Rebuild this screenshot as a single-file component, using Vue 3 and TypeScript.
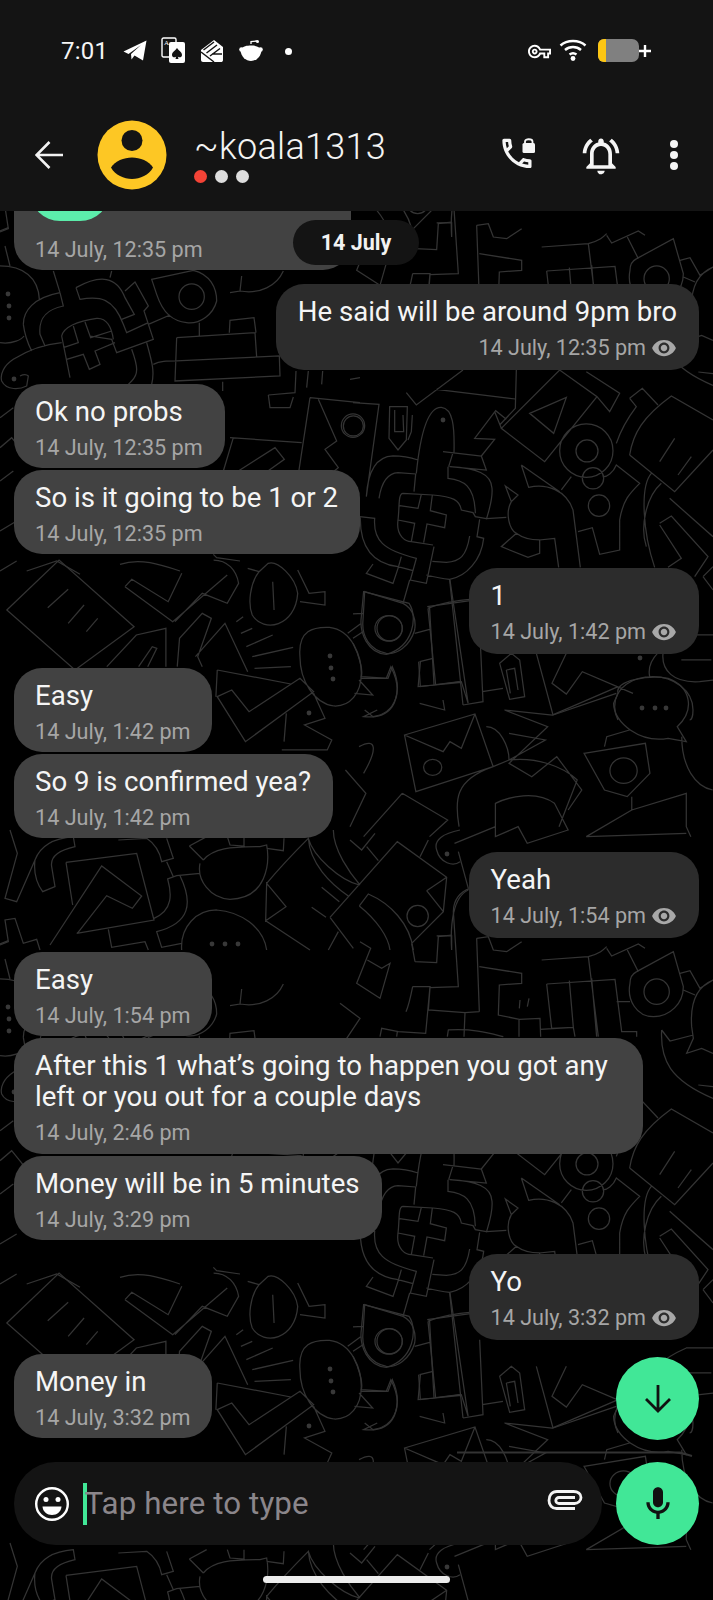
<script setup lang="ts">
interface Msg { text: string; time: string; out?: boolean; wide?: boolean }

const messages: Msg[] = [
  { text: 'He said will be around 9pm bro', time: '14 July, 12:35 pm', out: true },
  { text: 'Ok no probs', time: '14 July, 12:35 pm' },
  { text: 'So is it going to be 1 or 2', time: '14 July, 12:35 pm' },
  { text: '1', time: '14 July, 1:42 pm', out: true },
  { text: 'Easy', time: '14 July, 1:42 pm' },
  { text: 'So 9 is confirmed yea?', time: '14 July, 1:42 pm' },
  { text: 'Yeah', time: '14 July, 1:54 pm', out: true },
  { text: 'Easy', time: '14 July, 1:54 pm' },
  { text: 'After this 1 what’s going to happen you got any left or you out for a couple days', time: '14 July, 2:46 pm', wide: true },
  { text: 'Money will be in 5 minutes', time: '14 July, 3:29 pm' },
  { text: 'Yo', time: '14 July, 3:32 pm', out: true },
  { text: 'Money in', time: '14 July, 3:32 pm' },
]

const c = (x: number, y: number, r: number) =>
  `M${x - r} ${y}a${r} ${r} 0 1 0 ${2 * r} 0a${r} ${r} 0 1 0 ${-2 * r} 0`

const doodles: { t: string; d: string }[] = [
  {
    t: 'translate(353 360) scale(.33333)',
    d: 'M160 98L190 135L330 30M250 88L487 117M490 30L487 145L440 195M110 140L163 140L160 240L135 270L108 235ZM125 150L125 215L152 215L150 165M178 165L175 215L165 240M0 128L78 133L40 410' +
      c(0, 197, 35) +
      'M190 340C200 240 220 140 265 142C300 145 305 200 303 278M270 275L385 288L425 238L365 235L428 152L460 178M40 410C45 330 70 290 120 288C150 288 170 292 195 300M78 415C85 370 100 340 135 338L188 342L183 395M285 320L285 355C330 360 365 375 367 460M290 320C370 325 415 340 417 385C420 420 405 460 400 478M300 278L287 320M385 288L400 330L290 320M150 400C135 400 140 440 135 480C128 530 160 545 175 545L240 555M150 400L240 405C300 410 320 420 325 450L360 458L367 470L400 476L460 472M205 403L195 445L140 437M238 405L232 452L280 465L275 503L222 492L212 548M135 480L185 490L175 545M20 470L65 475C60 540 90 570 190 595L172 660L220 670L243 560M22 470C20 560 60 610 135 620L180 632M145 590L135 625L120 670L40 640L60 612M380 478L372 530L392 535C385 600 340 650 290 658C260 655 240 650 220 645M350 528C340 590 320 605 280 607L238 604M290 660L330 1035M225 745C260 730 320 720 350 718M225 745L248 975M200 905L240 895M197 905L202 980L320 965M380 800L390 1025L330 1035M388 995L450 985M270 1020L275 1050L200 1030M35 695L150 730C180 745 190 780 185 810C170 860 130 885 100 880C50 870 25 830 30 780Z' +
      c(110, 805, 38) +
      'M150 730L170 660M185 820L230 808M0 835L30 815M0 762L30 760M445 205L620 30L732 110L575 305ZM530 160L640 112L602 220ZM732 110L770 155L800 100L700 35M445 205L425 155' +
      c(700, 272, 80) + c(702, 273, 33) + c(720, 355, 32) + c(738, 437, 32) +
      'M625 390L655 350M505 315L527 382C580 370 640 390 660 450L682 622M505 315L620 395M457 378L495 405L475 425ZM475 425C455 460 470 510 490 520L445 560L525 592L560 580L560 540L605 535L617 622M490 520C510 535 540 540 560 540M675 515L718 503L740 583L800 570L800 480C810 420 830 400 860 370L790 315C780 340 760 350 752 350M830 285C840 220 870 170 955 108L1080 180M830 285L965 395L1080 270M830 115L868 85L915 135M830 115L850 140C820 180 800 220 790 250M920 305L965 235M975 345L1015 290M895 340C860 380 870 520 905 622M925 370C880 410 860 500 880 560M950 415L1080 530M920 490L955 468L1065 590L1025 650M920 495L985 595L945 622M1050 650L1080 620M1080 690L1050 650M550 880L600 1065L790 1000M640 880L597 970L640 1002L688 935L840 1000M890 950C880 900 920 860 1000 825L1080 825M930 880C925 930 960 970 1040 965L1080 960M985 900L1075 900M440 910L475 880L500 900L515 1010L470 1018ZM460 930L485 925L495 990M460 930L472 1000M0 850C20 890 30 930 25 950L105 955L118 920C150 990 130 1060 60 1070L35 1050M785 1040C785 980 840 950 900 950C960 950 1020 990 1020 1050C1020 1070 1015 1080 1010 1080M785 1040C785 1060 790 1070 795 1080',
  },
  {
    t: 'translate(0 211) scale(.33333)',
    d: 'M0 165C70 165 115 200 118 265M0 395C40 400 65 385 72 375M70 340C70 300 100 260 180 245L190 285C140 295 115 320 120 370L135 405M70 340C75 380 85 400 95 420M160 180L180 245M228 230L240 265C300 255 340 260 370 340L380 365L445 335M228 230C300 190 350 195 375 260L403 310L365 325M375 240L405 213L445 285L432 300L460 385L350 425L335 385L270 375M445 340L510 312M185 375C190 350 230 330 290 322C320 320 335 350 340 385M185 375L210 500M220 345L235 395L190 410M255 333L272 380L335 360M200 445L250 430L268 475L300 460L285 420L345 395M185 395C130 400 80 420 40 445C10 465 0 490 5 510C20 540 60 535 80 525L85 495C80 490 70 490 60 495M395 415C415 470 415 490 395 510L385 520M440 395C455 450 465 480 455 520M455 205L580 178C630 190 650 230 650 270C640 310 600 340 560 335C520 330 490 310 470 250Z' +
      c(575, 257, 38) +
      'M598 335L598 375M530 380L765 365L770 438M530 380L525 510L840 495L838 435L530 450C500 450 480 450 460 460M688 365L690 328L762 320L768 365M668 512L668 540M690 680L905 695M700 680L670 780M715 780L825 710L853 745L790 790M930 560L895 790M930 560L1080 575M805 552L885 545L888 480M805 552L810 590L870 590L880 558M920 530L925 480M965 520L968 480M955 565L1010 690L975 715L1015 770L990 790M1050 505L1080 500M690 245L720 240L725 195M720 240C780 250 830 225 850 180M335 180L330 200M0 620L40 590M0 710L35 680L100 760M15 105L30 165M0 60L25 50M0 810L40 780M0 960L50 930M0 1080L50 1050M80 1080L170 1050L240 1090M640 1030L650 1040L720 1050M360 1060C420 1040 480 1060 540 1080' +
      c(1060, 645, 30),
  },
  {
    t: 'translate(0 830) scale(.33333)',
    d: 'M105 90C120 50 160 25 220 20L225 50C180 60 150 80 155 110L165 170L128 185C110 160 100 130 105 90ZM105 90L50 215L15 205L52 70L30 0M198 97L410 70L462 270L230 310M198 97L218 225M150 345L305 108L425 198L397 235L320 197L232 310M355 30L440 25C470 45 480 70 485 95L520 85L500 25M500 95L520 140M600 130L530 137L503 147C515 190 520 240 462 265M540 137C580 220 570 280 470 305L485 352L545 340M568 48L610 90M568 48L620 20M610 90C640 55 690 50 780 50L800 45C810 100 800 205 690 208C630 205 590 150 600 100M682 20L690 45L732 48L732 20M800 55L850 62L852 25M545 360C540 290 590 240 650 240C720 245 790 290 800 360M325 298L335 352L435 335L445 360M800 160C850 100 890 60 925 25C930 100 990 160 1045 198M800 160L858 230L797 272ZM797 272L930 360M965 172L1018 215M935 232L978 262M925 25C940 80 1020 150 1078 165M1000 0C1000 60 1050 130 1080 165M990 262L1192 35L1340 142L1330 245L1235 340M990 262L1060 355M1280 182L1340 142M1280 182L1330 245M1078 228L1105 192C1170 220 1230 280 1240 360M1078 228C1130 270 1165 320 1170 360M1050 30L1085 60L1125 10M1100 50L1135 92M1260 80L1285 30M1375 65L1405 175M1310 60C1300 30 1330 10 1380 0M1310 60C1320 100 1360 110 1380 95M1355 360C1350 280 1360 200 1405 180M1310 318L1355 318L1355 360M985 360L1015 305M0 345L25 335L15 270L45 265L70 340L110 328L120 360' +
      c(1253, 258, 32),
  },
  {
    t: 'translate(340 840) scale(.33333)',
    d: 'M410 295L445 290L460 330L500 335L545 305M410 295L418 515M418 380L545 400L545 430L478 435L475 525L538 538L600 535L602 590M537 538L537 590M540 480L538 505M567 475L562 500M605 360L745 350C780 340 790 330 800 320M745 350L775 590M620 432L825 418L845 575L890 575L890 590M620 432L635 565L700 562L688 422M755 415L770 590M600 568L700 562L705 590M340 215C340 180 360 155 390 145M340 215L355 440L270 443L265 510L375 518L418 515M375 518L372 590M322 590L325 570C400 565 450 580 490 590M218 440L270 440L257 580L175 575L125 565L120 590M172 575L170 590M218 440C210 480 205 500 198 515M225 365L290 368L295 290L335 285M225 365L215 310M60 305L92 325L50 430L120 475L150 370L125 385L82 360M20 595L60 535L0 490M890 395L1000 335L1030 440C1030 490 990 530 940 530C890 530 860 480 870 430C870 410 880 400 890 395ZM895 395L862 330M870 485L830 485M800 325L815 348L895 312L915 325M1020 400L1050 392L1080 445L1119 420M1030 450L1065 465M1119 420C1070 440 1050 490 1055 560L1060 595L1040 640L1085 625L1119 640M965 570L990 603L1060 585M965 570C960 660 990 720 1119 775M1075 735L1119 740' +
      c(950, 455, 38),
  },
  {
    t: 'translate(0 560) scale(.4545 .33333)',
    d: 'M15 150L130 0L295 200L165 330ZM105 143L150 88M150 190L185 135M190 215L215 175M275 80L380 185L500 45M275 80L290 58L370 125L400 40M385 185L445 100L500 130L525 70C520 30 500 0 470 0M235 320L300 225L365 205L365 320M305 320L335 260L345 265L325 320M390 320L395 235L445 160L465 175L435 290L445 320M545 25L570 35C550 70 545 130 555 165C580 220 650 200 655 100C650 50 610 0 590 10L570 35M600 65L603 150M655 30L680 100L715 95L715 135L660 125M520 185L535 170M530 220L555 205M542 260L600 225M555 290L645 262M560 325L640 320M430 290L495 190L545 335M478 410L510 390L548 455L660 355L690 395L540 545ZM478 330L475 410M478 330L640 372M630 460L625 545M690 400L715 475L670 495L730 540L720 570L620 570M660 290C655 210 690 200 725 202C775 210 795 290 795 340C795 400 770 440 735 438C690 430 660 360 660 290ZM790 360L820 405L780 400M765 220L795 190M795 355L850 355L860 320C890 400 870 480 800 470L830 450M800 95L900 130C920 170 910 260 850 283C810 280 790 220 795 170ZM940 140L1035 122M945 140L955 375L1015 365L1030 430M925 305L920 380L1015 367M990 60L1030 430M890 525L1045 462L1085 620L915 695ZM890 525L975 575L990 545L1015 565L1045 462M760 630L805 700L770 800M885 700L800 830M885 700L985 780L945 830M790 560C830 530 830 570 800 640M1085 620C1000 660 1000 720 1010 800M1070 500C1100 500 1120 560 1120 600C1180 590 1240 620 1270 660L1230 800' +
      'M932 622a20 24 0 1 0 40 0a20 24 0 1 0 -40 0' +
      'M825 205a30 38 0 1 0 60 0a30 38 0 1 0 -60 0' +
      'M1360 400C1350 360 1430 345 1470 355C1520 380 1530 450 1490 500L1510 545L1470 535C1410 550 1350 490 1350 430ZM1110 450L1215 465L1360 380M1110 450L1205 500L1120 610L1170 650L1225 590L1280 690L1250 750M1285 580L1420 550L1430 640L1380 710L1330 690ZM1330 560L1335 530L1385 510M1500 530C1500 620 1530 680 1568 690M1390 710L1390 750L1510 700L1510 800L1520 830M1390 750L1290 830L1510 820M1085 620L1120 600L1200 540L1120 520M1090 730C1120 710 1180 690 1220 730L1250 810L1160 850L1140 800L1090 830ZM1000 850L1090 800' +
      'M1342 632a30 38 0 1 0 60 0a30 38 0 1 0 -60 0',
  },
]

const dots: [number, number][] = [
  [8, 294], [9, 306], [9, 318], [330, 656], [331, 668], [333, 679], [443, 420], [640, 658],
  [642, 708], [655, 708], [666, 708], [14, 379], [212, 944], [225, 944], [238, 944], [447, 854], [309, 713],
]
</script>

<template>
  <div class="page">
    <svg class="doodle" width="713" height="1600" viewBox="0 0 713 1600" aria-hidden="true">
      <defs>
        <g id="tile">
          <g v-for="(g, i) in doodles" :key="i" :transform="g.t">
            <path :d="g.d" fill="none" stroke="#343434" stroke-width="1.25" vector-effect="non-scaling-stroke" />
          </g>
          <circle v-for="(p, i) in dots" :key="'d' + i" :cx="p[0]" :cy="p[1]" r="2.4" fill="#383838" />
        </g>
      </defs>
      <use href="#tile" y="-713" />
      <use href="#tile" />
      <use href="#tile" y="713" />
      <path d="M457 1452.5H680L692 1456" fill="none" stroke="#333" stroke-width="2" />
    </svg>

    <header class="top">
      <div class="status">
        <span class="clock">7:01</span>
        <svg class="ic-tg" width="24" height="22" viewBox="0 0 24 22">
          <path d="M0.5 11.5L23.5 0.5L20 20.5L11.5 15.5L8.5 19.5L8 14L18 5L5.5 14Z" fill="#fff" />
        </svg>
        <svg class="ic-cards" width="25" height="27" viewBox="0 0 25 27">
          <rect x="1" y="1" width="14" height="19" rx="1.5" fill="#141414" stroke="#fff" stroke-width="1.4" />
          <text x="3" y="8" font-size="7" font-family="Liberation Serif, serif" fill="#fff">A</text>
          <rect x="8" y="5" width="16" height="21" rx="2" fill="#fff" />
          <path d="M16 11C18 14 21 15 21 18C21 20.500 18 21 16.800 19.500L17.500 22H14.500L15.200 19.500C14 21 11 20.500 11 18C11 15 14 14 16 11Z" fill="#141414" />
        </svg>
        <svg class="ic-stack" width="24" height="24" viewBox="0 0 24 24">
          <path d="M1 11L14 1L23 8V21C23 22.500 22 23 21 23H3C2 23 1 22 1 21Z" fill="#fff" />
          <path d="M3.500 11L14 3M6.500 14L17 6M10 17L20 9.500M1 13L14 23M22 15H12" fill="none" stroke="#141414" stroke-width="1.500" />
        </svg>
        <svg class="ic-reddit" width="24" height="22" viewBox="0 0 24 22">
          <path d="M12 4V1.500L18 1" fill="none" stroke="#fff" stroke-width="1.300" />
          <circle cx="18.500" cy="1.500" r="1.500" fill="#fff" />
          <circle cx="2.500" cy="9.500" r="2.300" fill="#fff" />
          <circle cx="21.500" cy="9.500" r="2.300" fill="#fff" />
          <path d="M1.500 10C4 6 8 5.500 12 5.500C16 5.500 20 6 22.500 10C22 17 17 21 12 21C7 21 2 17 1.500 10Z" fill="#fff" />
        </svg>
        <span class="notif-dot"></span>
        <span class="status-right">
          <svg class="ic-key" width="23" height="23" viewBox="0 0 24 24">
            <path fill="#fff" d="M22 19h-6v-4h-2.680c-1.140 2.420-3.600 4-6.320 4-3.860 0-7-3.140-7-7s3.140-7 7-7c2.720 0 5.170 1.580 6.320 4H24v6h-2v4zm-4-2h2v-4h2v-2H11.940l-.23-.67C11.010 8.340 9.110 7 7 7c-2.760 0-5 2.240-5 5s2.240 5 5 5c2.110 0 4.010-1.340 4.710-3.330l.23-.67H18v4zM7 15c-1.650 0-3-1.350-3-3s1.350-3 3-3 3 1.350 3 3-1.350 3-3 3zm0-4c-.55 0-1 .45-1 1s.45 1 1 1 1-.45 1-1-.45-1-1-1z" />
          </svg>
          <svg class="ic-wifi" width="28" height="22" viewBox="0 0 28 22">
            <path d="M1.500 6.500C8 0.500 20 0.500 26.500 6.500M6 11C10.500 7 17.500 7 22 11M10.500 15.500C12.500 14 15.500 14 17.500 15.500" fill="none" stroke="#fff" stroke-width="2.400" />
            <circle cx="14" cy="19.500" r="2.400" fill="#fff" />
          </svg>
          <span class="battery"><span class="battery-fill"></span></span>
          <svg class="plus" width="14" height="14" viewBox="0 0 14 14">
            <path d="M7 1V13M1 7H13" fill="none" stroke="#fff" stroke-width="2.400" />
          </svg>
        </span>
      </div>
      <div class="bar">
        <svg class="back" width="28" height="28" viewBox="0 0 28 28">
          <path d="M28 14H2M14.500 1L1.500 14L14.500 27" fill="none" stroke="#f2f2f2" stroke-width="2.600" />
        </svg>
        <svg class="avatar" width="70" height="70" viewBox="0 0 70 70">
          <circle cx="35" cy="35" r="34.500" fill="#fdc724" />
          <circle cx="35" cy="20.500" r="10.500" fill="#141414" />
          <path d="M14 47.500C18 41 27 37.500 35 37.500C43 37.500 52 41 56 47.500C52 55 43 59 35 59C27 59 18 55 14 47.500Z" fill="#141414" />
        </svg>
        <div class="who">
          <div class="name">~koala1313</div>
          <div class="presence"><i class="p red"></i><i class="p"></i><i class="p"></i></div>
        </div>
        <svg class="call" width="36" height="36" viewBox="0 0 36 36">
          <g transform="translate(-3.500 -3) scale(1.620)">
            <path fill="#f5f5f5" d="M6.540 5c.06.89.21 1.760.45 2.590l-1.200 1.200c-.41-1.200-.67-2.470-.76-3.790h1.510m9.860 12.020c.85.24 1.720.39 2.600.45v1.490c-1.320-.09-2.590-.35-3.800-.75l1.200-1.190M7.500 3H4c-.55 0-1 .45-1 1 0 9.390 7.610 17 17 17 .55 0 1-.45 1-1v-3.490c0-.55-.45-1-1-1-1.240 0-2.450-.2-3.570-.57-.1-.04-.21-.05-.31-.05-.26 0-.51.1-.71.29l-2.200 2.200c-2.830-1.450-5.150-3.760-6.590-6.590l2.200-2.200c.28-.28.36-.67.25-1.020C8.700 6.450 8.500 5.250 8.500 4c0-.55-.45-1-1-1z" />
          </g>
          <rect x="21.500" y="6" width="12.500" height="10" rx="1.500" fill="#f5f5f5" />
          <path d="M24 6.500V4.500C24 1.500 31.500 1.500 31.500 4.500V6.500" fill="none" stroke="#f5f5f5" stroke-width="1.800" />
        </svg>
        <svg class="bell" width="44" height="44" viewBox="0 0 24 24">
          <path fill="#f5f5f5" d="M7.580 4.080 6.150 2.650C3.750 4.480 2.170 7.300 2.030 10.500h2c.15-2.650 1.510-4.970 3.550-6.420zm12.390 6.420h2c-.15-3.200-1.730-6.020-4.120-7.850l-1.420 1.430c2.020 1.450 3.390 3.770 3.540 6.420zM18 11c0-3.070-1.640-5.640-4.500-6.320V4c0-.83-.67-1.500-1.500-1.500s-1.500.67-1.500 1.500v.68C7.630 5.360 6 7.920 6 11v5l-2 2v1h16v-1l-2-2v-5zm-2 6H8v-6c0-2.480 1.510-4.500 4-4.500s4 2.020 4 4.500v6zm-4 5c.14 0 .27-.01.4-.04.65-.14 1.180-.58 1.440-1.180.1-.24.15-.5.15-.78h-4c.01 1.100.9 2 2.010 2z" />
        </svg>
        <div class="kebab"><i></i><i></i><i></i></div>
      </div>
    </header>

    <main class="list">
      <div class="bubble in first">
        <div class="green-pill"></div>
        <div class="meta"><span>14 July, 12:35 pm</span></div>
      </div>
      <div v-for="(m, i) in messages" :key="i" class="bubble" :class="[m.out ? 'out' : 'in', { wide: m.wide }]">
        <div class="text">{{ m.text }}</div>
        <div class="meta">
          <span>{{ m.time }}</span>
          <svg v-if="m.out" width="26" height="26" viewBox="0 0 24 24">
            <path fill="#a8a8a8" d="M12 4.500C7 4.500 2.730 7.610 1 12c1.730 4.390 6 7.500 11 7.500s9.270-3.110 11-7.500c-1.730-4.390-6-7.500-11-7.500zM12 17c-2.760 0-5-2.240-5-5s2.240-5 5-5 5 2.240 5 5-2.240 5-5 5zm0-8c-1.660 0-3 1.340-3 3s1.340 3 3 3 3-1.340 3-3-1.340-3-3-3z" />
          </svg>
        </div>
      </div>
    </main>

    <div class="date-pill">14 July</div>

    <button class="fab down" aria-label="Scroll down">
      <svg width="30" height="30" viewBox="0 0 30 30">
        <path d="M15 1V27M3 15L15 27L27 15" fill="none" stroke="#111" stroke-width="2.800" />
      </svg>
    </button>

    <div class="composer">
      <div class="input">
        <svg class="smile" width="36" height="36" viewBox="0 0 36 36">
          <circle cx="18" cy="18" r="15.800" fill="none" stroke="#fff" stroke-width="2.400" />
          <circle cx="12" cy="13.500" r="2.500" fill="#fff" />
          <circle cx="24" cy="13.500" r="2.500" fill="#fff" />
          <path d="M8.500 20.500H27.500C27 26 23 29 18 29C13 29 9 26 8.500 20.500Z" fill="#fff" />
        </svg>
        <span class="caret"></span>
        <span class="placeholder">Tap here to type</span>
        <svg class="clip" width="36" height="24" viewBox="0 0 36 24">
          <path d="M28 20.500H9.500C5 20.500 2 17 2 12.500C2 7 5 3.500 10 3.500H26.500C31 3.500 34 6 34 9.500C34 13 31 15.500 27.500 15.500H12C10 15.500 8.800 14 8.800 12.500C8.800 11 10 9.500 12 9.500H28" fill="none" stroke="#f3f3f3" stroke-width="2.800" />
        </svg>
      </div>
      <button class="fab" aria-label="Record voice message">
        <svg width="40" height="40" viewBox="0 0 24 24">
          <path fill="#111" d="M12 14c1.660 0 3-1.340 3-3V5c0-1.660-1.340-3-3-3S9 3.340 9 5v6c0 1.660 1.340 3 3 3zm5-3c0 2.760-2.240 5-5 5s-5-2.240-5-5H5c0 3.530 2.610 6.430 6 6.920V21h2v-3.080c3.390-.49 6-3.390 6-6.920h-2z" />
        </svg>
      </button>
    </div>

    <div class="home"></div>
  </div>
</template>

<style>
html, body { margin: 0; background: #000; }
</style>

<style scoped>
.page {
  position: relative;
  width: 713px;
  height: 1600px;
  overflow: hidden;
  background: #000;
  color: #fff;
  font-family: Roboto, "Noto Sans", sans-serif;
}
.doodle { position: absolute; left: 0; top: 0; }

.top { position: relative; z-index: 2; background: #141414; height: 211px; }
.status { display: flex; align-items: center; height: 102px; padding: 0 61px; box-sizing: border-box; }
.clock { font-size: 24px; letter-spacing: .2px; color: #f5f5f5; width: 62px; }
.ic-tg { margin-right: 14px; }
.ic-cards { margin-top: -1px; margin-right: 14px; }
.ic-stack { margin-right: 15px; }
.ic-reddit { margin-right: 22px; }
.notif-dot { width: 7px; height: 7px; border-radius: 50%; background: #fff; }
.status-right { display: flex; align-items: center; margin-left: auto; }
.ic-key { margin-right: 8px; }
.ic-wifi { margin-right: 11px; margin-top: -2px; }
.battery { display: block; width: 41px; height: 23px; border-radius: 6px 7px 7px 6px; background: #808080; overflow: hidden; margin-top: -1px; }
.battery-fill { display: block; width: 8px; height: 100%; background: #fdc613; }
.plus { margin-left: -1px; }

.bar { display: flex; align-items: center; height: 106px; padding-left: 35px; }
.back { margin-right: 34px; }
.avatar { margin-right: 27px; }
.who { width: 308px; padding-top: 4px; }
.name { font-size: 36px; line-height: 42px; font-weight: 300; letter-spacing: .3px; color: #f4f4f4; margin-top: -6px; }
.presence { display: flex; gap: 8px; margin: 2px 0 0 0; }
.p { display: block; width: 13px; height: 13px; border-radius: 50%; background: #ddd; }
.p.red { background: #f44336; }
.call { margin-left: -1px; margin-right: 42px; }
.bell { margin-top: 1px; margin-right: 47px; }
.kebab { display: flex; flex-direction: column; gap: 3px; }
.kebab i { display: block; width: 8px; height: 8px; border-radius: 50%; background: #f5f5f5; }

.list { position: relative; z-index: 1; display: flex; flex-direction: column; padding: 0 14px; margin-top: -40px; }
.bubble { box-sizing: border-box; border-radius: 28px; padding: 12px 22px 8px 21px; width: fit-content; max-width: 629px; }
.bubble.in { background: #424242; margin-top: 2px; align-self: flex-start; }
.bubble.in .meta { margin-top: 9px; }
.bubble.out { background: #2c2c2c; margin-top: 14px; margin-bottom: 14px; align-self: flex-end; height: 86px; padding: 12px 22px 0; }
.bubble.out .meta { margin-top: 9px; }
.bubble.out + .bubble.in { margin-top: 0; }
.bubble.first { width: 337px; height: 99px; margin-top: 0; border-radius: 0 0 28px 28px; padding-left: 24px; padding-top: 0; }
.bubble.wide { width: 629px; padding-bottom: 9px; }
.first + .bubble.out { margin-top: 14px; }
.green-pill { width: 80px; height: 60px; margin-left: -8.500px; border-radius: 0 0 30px 30px; background: #5cedab; margin-top: -10px; margin-bottom: 17px; }
.bubble.first .meta { margin-left: -3px; margin-top: 0; }
.text { font-size: 27.600px; line-height: 31px; color: #f5f5f5; }
.meta { display: flex; justify-content: flex-end; align-items: center; gap: 5px; height: 24px; font-size: 21.600px; line-height: 24px; color: #a6a6a6; }
.in .meta { justify-content: flex-start; }

.date-pill { position: absolute; z-index: 3; left: 293px; top: 220px; width: 126px; height: 45px; border-radius: 23px; background: #141414; color: #f2f2f2; font-size: 21.500px; font-weight: 700; display: flex; align-items: center; justify-content: center; }

.fab { width: 83px; height: 83px; border: 0; padding: 0; border-radius: 50%; background: #41e797; display: flex; align-items: center; justify-content: center; flex: none; }
.down { position: absolute; z-index: 3; left: 616px; top: 1357px; }

.composer { position: absolute; z-index: 3; left: 14px; top: 1462px; width: 685px; display: flex; gap: 14px; }
.input { box-sizing: border-box; display: flex; align-items: center; width: 588px; height: 83px; border-radius: 42px; background: #141414; padding-left: 20px; padding-right: 19px; }
.smile { margin-right: 13px; }
.caret { width: 3.500px; height: 42px; background: #41e797; flex: none; }
.placeholder { font-size: 31.300px; color: #8b868b; margin-left: -2px; flex: 1; letter-spacing: .1px; }
.clip { flex: none; margin-top: -8px; }

.home { position: absolute; z-index: 4; left: 263px; top: 1576px; width: 187px; height: 7px; border-radius: 4px; background: #ececec; }
</style>
